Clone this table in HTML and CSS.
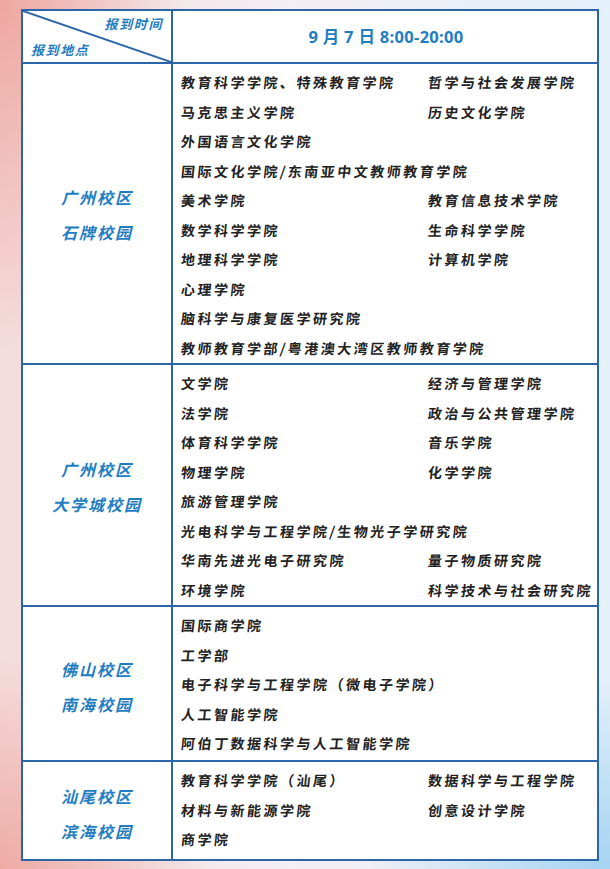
FILE: index.html
```html
<!DOCTYPE html>
<html lang="zh">
<head>
<meta charset="utf-8">
<link rel="stylesheet" href="styles.css">
</head>
<body>
<div class="page">
  <div class="table">
    <div class="row head">
      <div class="cell left diag">
        <svg class="diag-line" viewBox="0 0 100 100" preserveAspectRatio="none"><line x1="0" y1="0" x2="100" y2="100" vector-effect="non-scaling-stroke"/></svg>
        <span class="h-time">报到时间</span>
        <span class="h-place">报到地点</span>
      </div>
      <div class="cell right date">9 月 7 日 8:00-20:00</div>
    </div>

    <div class="row r1">
      <div class="cell left campus"><span>广州校区</span><span>石牌校园</span></div>
      <div class="cell right items">
        <div class="it">教育科学学院、特殊教育学院</div><div class="it">哲学与社会发展学院</div>
        <div class="it">马克思主义学院</div><div class="it">历史文化学院</div>
        <div class="it full">外国语言文化学院</div>
        <div class="it full">国际文化学院/东南亚中文教师教育学院</div>
        <div class="it">美术学院</div><div class="it">教育信息技术学院</div>
        <div class="it">数学科学学院</div><div class="it">生命科学学院</div>
        <div class="it">地理科学学院</div><div class="it">计算机学院</div>
        <div class="it full">心理学院</div>
        <div class="it full">脑科学与康复医学研究院</div>
        <div class="it full">教师教育学部/粤港澳大湾区教师教育学院</div>
      </div>
    </div>

    <div class="row r2">
      <div class="cell left campus"><span>广州校区</span><span>大学城校园</span></div>
      <div class="cell right items">
        <div class="it">文学院</div><div class="it">经济与管理学院</div>
        <div class="it">法学院</div><div class="it">政治与公共管理学院</div>
        <div class="it">体育科学学院</div><div class="it">音乐学院</div>
        <div class="it">物理学院</div><div class="it">化学学院</div>
        <div class="it full">旅游管理学院</div>
        <div class="it full">光电科学与工程学院/生物光子学研究院</div>
        <div class="it">华南先进光电子研究院</div><div class="it">量子物质研究院</div>
        <div class="it">环境学院</div><div class="it">科学技术与社会研究院</div>
      </div>
    </div>

    <div class="row r3">
      <div class="cell left campus"><span>佛山校区</span><span>南海校园</span></div>
      <div class="cell right items">
        <div class="it full">国际商学院</div>
        <div class="it full">工学部</div>
        <div class="it full">电子科学与工程学院（微电子学院）</div>
        <div class="it full">人工智能学院</div>
        <div class="it full">阿伯丁数据科学与人工智能学院</div>
      </div>
    </div>

    <div class="row r4">
      <div class="cell left campus"><span>汕尾校区</span><span>滨海校园</span></div>
      <div class="cell right items">
        <div class="it">教育科学学院（汕尾）</div><div class="it">数据科学与工程学院</div>
        <div class="it">材料与新能源学院</div><div class="it">创意设计学院</div>
        <div class="it full">商学院</div>
      </div>
    </div>
  </div>
</div>
</body>
</html>
```

FILE: styles.css
```css
* { box-sizing: border-box; }
html, body { margin: 0; padding: 0; }
body {
  width: 610px;
  height: 869px;
  overflow: hidden;
  font-family: "Noto Sans CJK SC", "Noto Sans", sans-serif;
  background:
    radial-gradient(ellipse 260px 500px at 0% 0%, rgba(236, 150, 140, 0.75), rgba(236, 150, 140, 0) 70%),
    radial-gradient(ellipse 300px 300px at 0% 100%, rgba(236, 150, 140, 0.7), rgba(236, 150, 140, 0) 70%),
    radial-gradient(ellipse 320px 260px at 100% 100%, rgba(150, 205, 240, 0.8), rgba(150, 205, 240, 0) 75%),
    linear-gradient(90deg, #f4dcdc 0%, #f3eef2 45%, #e4f0fa 100%);
}
.page {
  padding: 9px 11px 0 21px;
}
.table {
  width: 578px;
  border: 2px solid #2d66a8;
  background: #fff;
}
.row {
  display: grid;
  grid-template-columns: 150px 1fr;
  border-top: 2px solid #2d66a8;
}
.row.head { border-top: none; height: 51px; }
.cell.left {
  border-right: 2px solid #2d66a8;
}
.diag {
  position: relative;
}
.diag-line {
  position: absolute;
  left: 0; top: 0;
  width: 100%; height: 100%;
}
.diag-line line {
  stroke: #2d66a8;
  stroke-width: 2px;
}
.h-time, .h-place {
  position: absolute;
  font-size: 13px;
  font-weight: 700;
  font-style: italic;
  letter-spacing: 1.6px;
  color: #1f7dc2;
  line-height: 16px;
}
.h-time { right: 8px; top: 5px; }
.h-place { left: 8px; top: 31px; }
.date {
  display: flex;
  align-items: center;
  justify-content: center;
  font-family: "Open Sans", "Noto Sans CJK SC", sans-serif;
  font-weight: 700;
  font-size: 16.5px;
  letter-spacing: 0.3px;
  color: #1f7dc2;
  padding-left: 2px;
  padding-bottom: 1px;
}
.campus {
  display: flex;
  flex-direction: column;
  justify-content: center;
  align-items: center;
  font-size: 16px;
  font-weight: 700;
  font-style: italic;
  letter-spacing: 2px;
  color: #1f7dc2;
  line-height: 35px;
  padding-top: 3px;
}
.r3 .campus { padding-top: 7px; }
.r4 .campus { padding-top: 8px; }
.items {
  display: grid;
  grid-template-columns: 247px 1fr;
  padding: 4px 0 0 8px;
}
.r3 .items { padding-bottom: 1.5px; }
.r4 .items { padding-bottom: 4px; }
.it {
  font-size: 14px;
  font-weight: 700;
  color: #222;
  letter-spacing: 2.5px;
  line-height: 29.5px;
  white-space: nowrap;
  transform: skewX(-6deg);
}
.it.full { grid-column: 1 / span 2; }
```
